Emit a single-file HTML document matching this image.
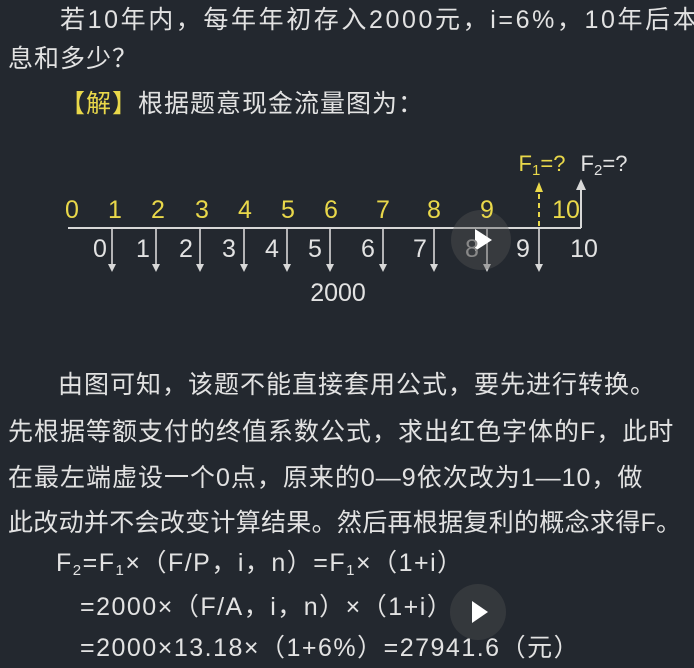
<!DOCTYPE html>
<html><head><meta charset="utf-8"><style>
html,body{margin:0;padding:0}
body{width:694px;height:668px;background:#23282f;position:relative;overflow:hidden;font-family:"Liberation Sans","Noto Sans CJK SC",sans-serif;color:#e2e2e2}
.t{position:absolute;font-size:25px;line-height:30px;white-space:nowrap;letter-spacing:1px}
.y{color:#e9d84a}
.n{position:absolute;font-size:25px;line-height:26px;transform:translateX(-50%)}
sub{font-size:15px;vertical-align:-4px}
</style></head><body>
<div class="t" style="left:60px;top:5px;letter-spacing:2.6px">若10年内，每年年初存入2000元，i=6%，10年后本</div>
<div class="t" style="left:8px;top:44px">息和多少？</div>
<div class="t" style="left:60px;top:89px"><span class="y">【解】</span>根据题意现金流量图为：</div>

<svg style="position:absolute;left:0;top:0" width="694" height="340">
<g stroke="#d8d8d8" stroke-width="2" fill="#d8d8d8">
<line x1="68" y1="228" x2="581" y2="228"/>
<line x1="581" y1="228" x2="581" y2="186"/>
<path d="M576 190 L581 179 L586 190Z" stroke="none"/>
</g>
<g fill="#d8d8d8" stroke="#d8d8d8" stroke-width="1.6">
<line x1="112" y1="228" x2="112" y2="265"/><path d="M108 264 L112 272 L116 264Z" stroke="none"/>
<line x1="156" y1="228" x2="156" y2="265"/><path d="M152 264 L156 272 L160 264Z" stroke="none"/>
<line x1="200" y1="228" x2="200" y2="265"/><path d="M196 264 L200 272 L204 264Z" stroke="none"/>
<line x1="244" y1="228" x2="244" y2="265"/><path d="M240 264 L244 272 L248 264Z" stroke="none"/>
<line x1="287" y1="228" x2="287" y2="265"/><path d="M283 264 L287 272 L291 264Z" stroke="none"/>
<line x1="330" y1="228" x2="330" y2="265"/><path d="M326 264 L330 272 L334 264Z" stroke="none"/>
<line x1="383" y1="228" x2="383" y2="265"/><path d="M379 264 L383 272 L387 264Z" stroke="none"/>
<line x1="434" y1="228" x2="434" y2="265"/><path d="M430 264 L434 272 L438 264Z" stroke="none"/>
<line x1="487" y1="228" x2="487" y2="265"/><path d="M483 264 L487 272 L491 264Z" stroke="none"/>
<line x1="539" y1="228" x2="539" y2="265"/><path d="M535 264 L539 272 L543 264Z" stroke="none"/>
</g>
<line x1="539" y1="226" x2="539" y2="192" stroke="#e9d84a" stroke-width="2" stroke-dasharray="5,4"/>
<path d="M535 192 L539 182 L543 192Z" fill="#e9d84a"/>
<circle cx="481" cy="240" r="30" fill="#555" opacity="0.4"/>
<path d="M475 229 L475 251 L492 240Z" fill="#fff"/>
</svg>
<div class="n y" style="left:72px;top:197px">0</div>
<div class="n y" style="left:115px;top:197px">1</div>
<div class="n y" style="left:158px;top:197px">2</div>
<div class="n y" style="left:202px;top:197px">3</div>
<div class="n y" style="left:245px;top:197px">4</div>
<div class="n y" style="left:288px;top:197px">5</div>
<div class="n y" style="left:331px;top:197px">6</div>
<div class="n y" style="left:383px;top:197px">7</div>
<div class="n y" style="left:434px;top:197px">8</div>
<div class="n y" style="left:487px;top:197px">9</div>
<div class="n y" style="left:566px;top:197px">10</div>
<div class="n" style="left:100px;top:236px">0</div>
<div class="n" style="left:143px;top:236px">1</div>
<div class="n" style="left:186px;top:236px">2</div>
<div class="n" style="left:229px;top:236px">3</div>
<div class="n" style="left:272px;top:236px">4</div>
<div class="n" style="left:315px;top:236px">5</div>
<div class="n" style="left:368px;top:236px">6</div>
<div class="n" style="left:420px;top:236px">7</div>
<div class="n" style="left:472px;top:236px;color:#888">8</div>
<div class="n" style="left:523px;top:236px">9</div>
<div class="n" style="left:584px;top:236px">10</div>
<div class="n" style="left:338px;top:280px">2000</div>
<div class="n y" style="left:542px;top:151px;font-size:22px">F<sub>1</sub>=?</div>
<div class="n" style="left:604px;top:151px;font-size:22px">F<sub>2</sub>=?</div>

<div class="t" style="left:58px;top:370px">由图可知，该题不能直接套用公式，要先进行转换。</div>
<div class="t" style="left:8px;top:417px">先根据等额支付的终值系数公式，求出红色字体的F，此时</div>
<div class="t" style="left:8px;top:463px">在最左端虚设一个0点，原来的0—9依次改为1—10，做</div>
<div class="t" style="left:8px;top:508px;letter-spacing:0.3px">此改动并不会改变计算结果。然后再根据复利的概念求得F。</div>
<div class="t" style="left:56px;top:548px;font-size:25px;letter-spacing:1.5px">F<sub>2</sub>=F<sub>1</sub>×（F/P，i，n）=F<sub>1</sub>×（1+i）</div>
<div class="t" style="left:80px;top:592px;font-size:25px;letter-spacing:1.5px">=2000×（F/A，i，n）×（1+i）</div>
<div class="t" style="left:80px;top:633px;font-size:25px;letter-spacing:1.5px">=2000×13.18×（1+6%）=27941.6（元）</div>
<svg style="position:absolute;left:448px;top:582px" width="60" height="60">
<circle cx="30" cy="30" r="28" fill="#555" opacity="0.35"/>
<path d="M24 19 L24 41 L40 30Z" fill="#fff"/>
</svg>
</body></html>
